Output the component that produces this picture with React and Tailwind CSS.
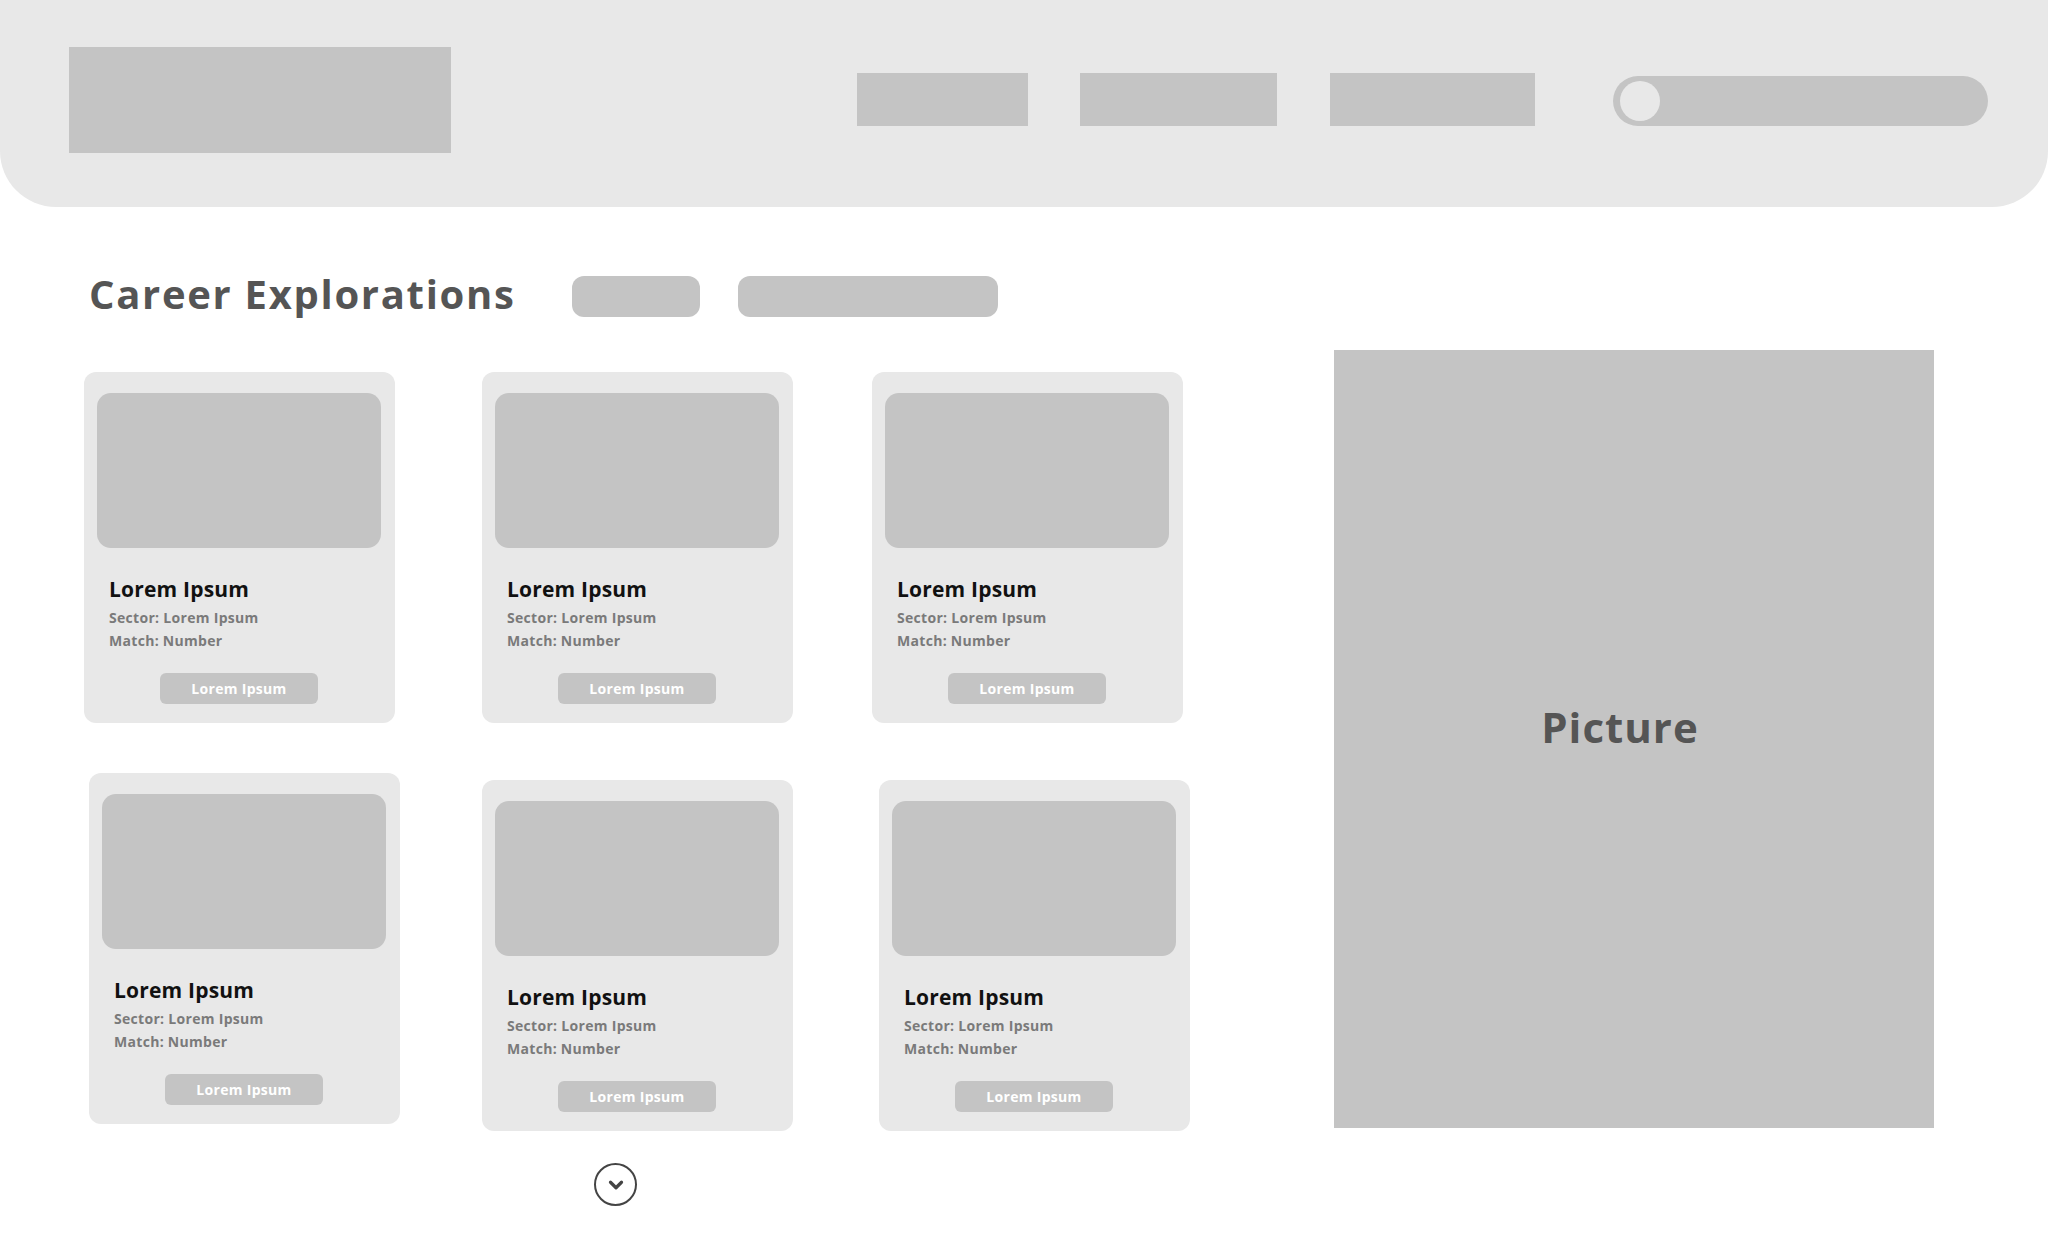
import { ChevronDown } from "lucide-react";

// card offsets mimic the loose wireframe placement
const rows = [
  [
    { key: "a1", wrap: "" },
    { key: "a2", wrap: "ml-[87px]" },
    { key: "a3", wrap: "ml-[79px]" },
  ],
  [
    { key: "b1", wrap: "ml-[5px]" },
    { key: "b2", wrap: "ml-[82px] mt-[7px]" },
    { key: "b3", wrap: "ml-[86px] mt-[7px]" },
  ],
];

const CareerCard = ({ className = "" }) => (
  <div className={`w-[311px] shrink-0 bg-[#e8e8e8] rounded-[12px] pt-[21px] pb-[19px] pl-[13px] pr-[14px] flex flex-col ${className}`}>
    <div className="h-[155px] w-full bg-[#c4c4c4] rounded-[14px]" />
    <div className="pl-[12px] mt-[28px]">
      <h3 className="text-[21px] leading-[26px] font-bold text-[#111] tracking-[0.2px]">Lorem Ipsum</h3>
      <p className="mt-[4px] text-[14px] leading-[23px] font-bold text-[#7a7a7a] tracking-[0.3px]">Sector: Lorem Ipsum</p>
      <p className="text-[14px] leading-[23px] font-bold text-[#7a7a7a] tracking-[0.3px]">Match: Number</p>
    </div>
    <div className="mt-[21px] flex justify-center">
      <button className="w-[158px] h-[31px] rounded-[6px] bg-[#c4c4c4] text-white text-[14px] font-bold tracking-[0.3px]">
        Lorem Ipsum
      </button>
    </div>
  </div>
);

export default function App() {
  return (
    <div className="min-h-[1234px] w-[2048px] bg-white font-['Open_Sans',_'Liberation_Sans',_sans-serif]">
      {/* header */}
      <header className="h-[207px] bg-[#e8e8e8] rounded-b-[56px] flex items-center pl-[69px] pr-[60px] pb-[8px]">
        <div className="w-[382px] h-[106px] bg-[#c4c4c4]" />
        <nav className="ml-auto flex items-center">
          <div className="w-[171px] h-[53px] bg-[#c4c4c4]" />
          <div className="ml-[52px] w-[197px] h-[53px] bg-[#c4c4c4]" />
          <div className="ml-[53px] w-[205px] h-[53px] bg-[#c4c4c4]" />
          <div className="ml-[78px] mt-[3px] w-[375px] h-[50px] rounded-full bg-[#c4c4c4] flex items-center">
            <div className="ml-[7px] w-[40px] h-[40px] rounded-full bg-[#e8e8e8]" />
          </div>
        </nav>
      </header>

      <main className="flex items-start pl-[84px]">
        <section className="w-[1106px] shrink-0">
          <div className="mt-[63px] ml-[5px] flex items-center h-[48px]">
            <h1 className="w-[483px] shrink-0 text-[40px] leading-[48px] font-bold text-[#555] tracking-[1.7px]">
              Career Explorations
            </h1>
            <div className="mt-[5px] w-[128px] h-[41px] rounded-[12px] bg-[#c4c4c4]" />
            <div className="mt-[5px] ml-[38px] w-[260px] h-[41px] rounded-[12px] bg-[#c4c4c4]" />
          </div>

          <div className="mt-[54px] flex flex-col gap-[50px]">
            {rows.map((row, i) => (
              <div key={i} className="flex items-start">
                {row.map((c) => (
                  <CareerCard key={c.key} className={c.wrap} />
                ))}
              </div>
            ))}
          </div>

          <div className="mt-[32px] ml-[510px] w-[43px] h-[43px] rounded-full border-[2.5px] border-[#444] flex items-center justify-center text-[#444]">
            <ChevronDown size={22} strokeWidth={3.5} />
          </div>
        </section>

        <aside className="mt-[143px] ml-[144px] w-[600px] h-[778px] bg-[#c4c4c4] flex items-center justify-center pr-[28px] pb-[26px]">
          <span className="text-[42px] font-bold text-[#555] tracking-[1px]">Picture</span>
        </aside>
      </main>
    </div>
  );
}
